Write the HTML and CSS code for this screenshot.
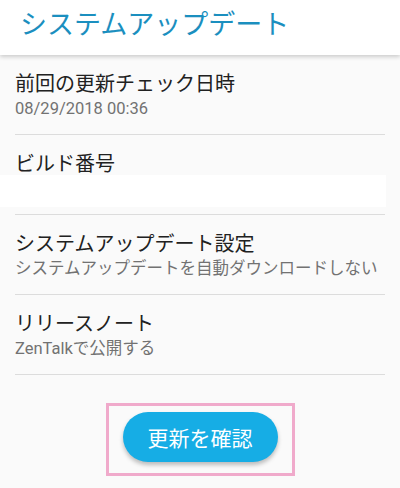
FILE: index.html
```html
<!DOCTYPE html>
<html lang="ja">
<head>
    <meta charset="UTF-8">
    <meta name="viewport" content="width=device-width, initial-scale=1.0">
    <title>システムアップデート</title>
    <link rel="stylesheet" href="styles.css">
</head>
<body>
    <header class="app-bar">
        <h1>システムアップデート</h1>
    </header>

    <div class="list">
        <div class="item">
            <div class="item-title">前回の更新チェック日時</div>
            <div class="item-sub">08/29/2018 00:36</div>
        </div>
        <div class="item">
            <div class="item-title">ビルド番号</div>
            <div class="blank"></div>
        </div>
        <div class="item">
            <div class="item-title">システムアップデート設定</div>
            <div class="item-sub">システムアップデートを自動ダウンロードしない</div>
        </div>
        <div class="item">
            <div class="item-title">リリースノート</div>
            <div class="item-sub">ZenTalkで公開する</div>
        </div>
    </div>

    <div class="actions">
        <div class="highlight">
            <button class="check-btn">更新を確認</button>
        </div>
    </div>
</body>
</html>
```

FILE: styles.css
```css
body {
    margin: 0;
    background: #fafafa;
    font-family: Roboto, "Noto Sans CJK JP", sans-serif;
    color: #212121;
}
.app-bar {
    background: #fff;
    height: 55px;
    box-shadow: 0 2px 4px rgba(0, 0, 0, 0.18);
    position: relative;
}
.app-bar h1 {
    margin: 0;
    padding-left: 20px;
    font-size: 27px;
    font-weight: normal;
    line-height: 50px;
    color: #1b8fbf;
}
.item {
    margin: 0 15px;
    height: 80px;
    box-sizing: border-box;
    border-bottom: 1px solid #dcdcdc;
    padding-top: 17px;
}
.item-title {
    font-size: 20px;
    line-height: 24px;
}
.item-sub {
    font-size: 16.5px;
    line-height: 26px;
    color: #727272;
    white-space: nowrap;
}
.blank {
    background: #fff;
    height: 32px;
    margin: -1px -1px 0 -15px;
}
.actions {
    display: flex;
    justify-content: center;
    padding-top: 28px;
}
.highlight {
    border: 3px solid #f0aacb;
    padding: 6px 14px 11px;
}
.check-btn {
    display: block;
    width: 155px;
    height: 50px;
    border: none;
    border-radius: 25px;
    background: #16ade5;
    color: #fff;
    font-family: inherit;
    font-size: 21px;
    box-shadow: 0 3px 4px rgba(0, 0, 0, 0.25);
}
```
